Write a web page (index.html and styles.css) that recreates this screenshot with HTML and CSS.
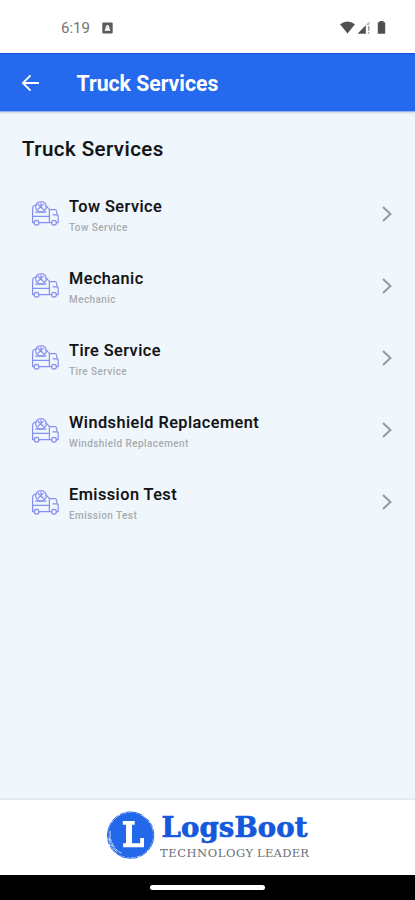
FILE: index.html
```html
<!DOCTYPE html>
<html lang="en">
<head>
<meta charset="utf-8">
<title>Truck Services</title>
<link rel="stylesheet" href="styles.css">
</head>
<body>
<svg width="0" height="0" class="defs" aria-hidden="true">
  <symbol id="truck" viewBox="0 0 28 27">
    <g fill="none" stroke="#8790f0" stroke-width="1.25" stroke-linejoin="round" stroke-linecap="round">
      <path d="M3 22.5H1.6V8.2Q1.6 6.6 3 5.8L4.5 5M15 6L18.4 9.4V22.5H8.2M1.6 16.4H18.4M18.4 9.5H24.2Q26 10 26 14.6Q27.4 15.4 27.2 17V22.5H25.6M18.4 22.5H20.4M22 14.8H26"/>
      <circle cx="5.6" cy="22.8" r="2.4"/><circle cx="23" cy="22.8" r="2.4"/>
      <circle cx="10" cy="6.8" r="5.3"/>
      <path d="M7 4.2L12.8 9.8M7.2 9L12.4 4.4M10 3V5.4M4.6 12H15"/>
    </g>
  </symbol>
  <symbol id="chevron" viewBox="0 0 12 18">
    <path d="M2 2L9.4 9L2 16" fill="none" stroke="#999c9f" stroke-width="2.1"/>
  </symbol>
</svg>
<div class="status">
  <span class="time">6:19</span>
  <svg class="notice" width="11" height="12" viewBox="0 0 11 12"><rect x=".3" y=".5" width="10.4" height="11" rx="1" fill="#5c5c5c"/><path d="M2.3 8.7C3.6 8 3.4 5.7 4 4.1Q5.5 1.8 7 4.1C7.6 5.7 7.4 8 8.7 8.7Z" fill="#fff"/><circle cx="5.5" cy="5.4" r=".8" fill="#bbb"/></svg>
  <svg class="signals" width="48" height="16" viewBox="0 0 48 16">
    <path d="M1 4.2Q8.5-1.2 16 4.2L8.5 13.6Z" fill="#505050"/>
    <path d="M18.5 13.7L26.8 5.2V13.7Z" fill="#505050"/><path d="M26.6 5L30.5 1.2V5Z" fill="#bbb"/><path d="M29.7 6V10.8M29.7 12.2V13.8" stroke="#999" stroke-width="1.5"/>
    <path d="M39 2.2H40.5V1H44.5V2.2H46.2V13.7H38.8V2.2Z" fill="#505050"/>
  </svg>
</div>
<header class="bar">
  <svg class="back" width="19" height="18" viewBox="0 0 19 18"><path d="M18 9H2M9.5 1.4L1.9 9L9.5 16.6" fill="none" stroke="#fff" stroke-width="1.9"/></svg>
  <span class="title">Truck Services</span>
</header>
<main>
  <h1>Truck Services</h1>
  <div class="item"><svg class="truck"><use href="#truck"/></svg><div class="text"><div class="name">Tow Service</div><div class="sub">Tow Service</div></div><svg class="chev"><use href="#chevron"/></svg></div>
  <div class="item"><svg class="truck"><use href="#truck"/></svg><div class="text"><div class="name">Mechanic</div><div class="sub">Mechanic</div></div><svg class="chev"><use href="#chevron"/></svg></div>
  <div class="item"><svg class="truck"><use href="#truck"/></svg><div class="text"><div class="name">Tire Service</div><div class="sub">Tire Service</div></div><svg class="chev"><use href="#chevron"/></svg></div>
  <div class="item"><svg class="truck"><use href="#truck"/></svg><div class="text"><div class="name">Windshield Replacement</div><div class="sub">Windshield Replacement</div></div><svg class="chev"><use href="#chevron"/></svg></div>
  <div class="item"><svg class="truck"><use href="#truck"/></svg><div class="text"><div class="name">Emission Test</div><div class="sub">Emission Test</div></div><svg class="chev"><use href="#chevron"/></svg></div>
</main>
<footer>
  <svg width="206" height="56" viewBox="0 0 206 56">
    <circle cx="24.6" cy="27.2" r="22.6" fill="#2468ea"/>
    <circle cx="24.6" cy="27.2" r="23.2" fill="none" stroke="#2468ea" stroke-width="1" stroke-dasharray="17 1 9 1.5 5 1"/>
    <path d="M4.1 23Q3 38 15.5 45.3M3 29Q4.5 39 12 44.5M37 7.5L42 10.8M39 7L45 13.3" fill="none" stroke="#fff" stroke-width=".8" stroke-dasharray="6 1.5 3 1"/>
    <path d="M16.8 12.9H28.7V16.7H26V35.2H34.2V30H38V39.2H17.1V35.3H20V16.7H16.8Z" fill="#fff"/>
    <text class="brand" x="55.5" y="29" textLength="146" lengthAdjust="spacing">LogsBoot</text>
    <text class="tag" x="54" y="49.3" textLength="93" lengthAdjust="spacing">TECHNOLOGY</text>
    <text class="tag" x="151" y="49.3" textLength="52" lengthAdjust="spacing">LEADER</text>
  </svg>
</footer>
<div class="nav"><div class="pill"></div></div>
</body>
</html>
```

FILE: styles.css
```css
* { box-sizing: border-box; }
body { margin: 0; height: 900px; display: flex; flex-direction: column; background: #f0f7fc; font-family: Roboto, sans-serif; overflow: hidden; }
svg { display: block; flex: none; }
.defs { position: absolute; }
.status { height: 53px; flex: none; background: #fff; display: flex; align-items: center; padding: 3px 28px 0 61px; }
.time { font-size: 15px; line-height: 18px; color: #737373; letter-spacing: 0; width: 41px; }
.signals { margin-left: auto; }
.bar { height: 59px; flex: none; background: #2469ee; border-top: 1px solid #1053d7; border-bottom: 1px solid #8fb2f2; box-shadow: 0 1px 2px #c8d3df; display: flex; align-items: center; padding: 1px 0 0 21px; }
.back { margin-top: -1px; }
.title { margin: 2px 0 0 36.5px; font-size: 21.2px; font-weight: 700; color: #fff; line-height: 26px; }
main { flex: 1; padding: 24px 0 0; }
h1 { margin: 0 0 15px 22px; font-size: 20.5px; line-height: 26px; font-weight: 500; letter-spacing: .46px; color: #111416; -webkit-text-stroke: .15px #111416; }
.item { height: 72.2px; display: flex; align-items: center; padding: 0 22px 0 31px; }
.truck { width: 28px; height: 27px; margin-top: 1px; }
.text { margin-left: 10px; padding-top: 5px; flex: 1; }
.name { font-size: 16.3px; line-height: 20px; font-weight: 500; letter-spacing: .46px; color: #101214; -webkit-text-stroke: .15px #101214; }
.sub { margin-top: 4px; font-size: 10px; line-height: 14px; font-weight: 500; letter-spacing: .42px; color: #a7abae; }
.chev { width: 12px; height: 18px; margin-top: 1px; }
footer { height: 77px; flex: none; background: #fff; border-top: 2px solid #e5eaed; display: flex; justify-content: center; padding: 8px 0 0 2px; }
.brand { font: 700 27.5px "DejaVu Serif", serif; fill: #1558dc; stroke: #1558dc; stroke-width: .7px; }
.tag { font: 11.5px "DejaVu Serif", serif; fill: #6a6e76; }
.nav { height: 25px; flex: none; background: #000; display: flex; justify-content: center; padding-top: 10px; }
.pill { width: 115px; height: 5px; border-radius: 3px; background: #fff; }
```
